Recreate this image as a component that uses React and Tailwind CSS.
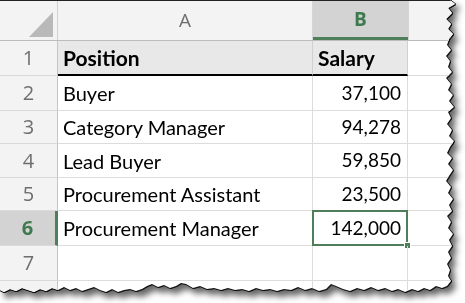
import React from "react";

const torn =
  "[clip-path:polygon(0px_0px,450px_0px,455px_4px,448px_8px,452px_13px,446px_19px,451px_24px,448px_29px,453px_34px,449px_39px,447px_45px,451px_50px,446px_56px,450px_61px,448px_67px,452px_72px,446px_78px,451px_84px,448px_90px,453px_95px,449px_101px,454px_107px,448px_112px,451px_118px,447px_124px,452px_130px,449px_136px,454px_141px,450px_147px,447px_153px,452px_158px,448px_164px,453px_170px,449px_176px,446px_181px,451px_187px,448px_193px,453px_199px,449px_205px,452px_211px,447px_216px,451px_222px,448px_228px,453px_234px,449px_240px,452px_246px,448px_252px,451px_258px,447px_264px,450px_270px,448px_276px,451px_281px,447px_286px,442px_288px,436px_286px,430px_290px,424px_288px,418px_291px,412px_289px,405px_292px,398px_289px,392px_291px,385px_288px,378px_290px,371px_287px,364px_290px,357px_288px,350px_291px,343px_289px,336px_286px,331px_284px,326px_289px,319px_291px,312px_288px,305px_290px,298px_287px,291px_290px,284px_289px,277px_291px,270px_289px,263px_290px,256px_288px,249px_291px,242px_289px,235px_290px,228px_288px,221px_290px,214px_288px,207px_289px,200px_286px,193px_288px,186px_284px,181px_283px,176px_286px,170px_288px,164px_285px,158px_287px,152px_284px,147px_286px,142px_289px,136px_291px,130px_289px,124px_290px,118px_292px,112px_289px,106px_292px,100px_290px,94px_287px,88px_289px,82px_291px,76px_288px,70px_290px,64px_287px,58px_290px,52px_288px,46px_291px,40px_289px,34px_292px,28px_290px,22px_288px,16px_291px,10px_289px,4px_292px,0px_290px)]";

const rows = [
  { n: 1, a: "Position", b: "Salary", h: "h-[35px]" },
  { n: 2, a: "Buyer", b: "37,100", h: "h-[35px]" },
  { n: 3, a: "Category Manager", b: "94,278", h: "h-[33px]" },
  { n: 4, a: "Lead Buyer", b: "59,850", h: "h-[34px]" },
  { n: 5, a: "Procurement Assistant", b: "23,500", h: "h-[33px]" },
  { n: 6, a: "Procurement Manager", b: "142,000", h: "h-[35px]" },
  { n: 7, a: "", b: "", h: "h-[35px]" },
  { n: 8, a: "", b: "", h: "h-[34px]" },
];

const cellFont = "font-['Lato','Open_Sans',sans-serif] text-black";
const headFont = "font-['Open_Sans','Noto_Sans',sans-serif] text-[19px]";

export default function App() {
  return (
    <div className="w-[465px] h-[303px] bg-white overflow-hidden">
      <div className="[filter:drop-shadow(1px_0_0_#111)_drop-shadow(0_1px_0_#111)_drop-shadow(4px_5px_3px_rgba(0,0,0,0.6))]">
        <div className={`w-[458px] h-[296px] bg-white overflow-hidden border-t border-[#222] ${torn}`}>
          {/* column header row */}
          <div className="flex h-[40px] bg-[#f3f3f3] border-b border-[#bcbcbc]">
            <div className="w-[58px] shrink-0 border-r border-[#d0d0d0] relative">
              <svg className="absolute left-0 top-0" width="58" height="40">
                <polygon points="29,36 53,36 53,11" fill="#b9b9b9" />
              </svg>
            </div>
            <div className={`w-[255px] shrink-0 border-r border-[#d6d6d6] flex items-center justify-center text-[#6e6e6e] ${headFont}`}>
              A
            </div>
            <div className={`w-[95px] shrink-0 bg-[#d3d3d3] border-b-[3px] border-[#4f7f5a] flex items-center justify-center font-bold text-[#3f7a4e] ${headFont}`}>
              B
            </div>
            <div className="flex-1 border-l border-[#d6d6d6]" />
          </div>

          {rows.map((r) => {
            const isHead = r.n === 1;
            const isSel = r.n === 6;
            return (
              <div key={r.n} className={`flex ${r.h}`}>
                <div
                  className={`w-[58px] shrink-0 flex items-center justify-center border-b border-[#dadada] text-[20px] ${headFont} ${
                    isSel
                      ? "bg-[#d3d3d3] text-[#3f7a4e] font-bold border-r-[3px] border-r-[#4f7f5a]"
                      : "bg-[#f3f3f3] text-[#6e6e6e] border-r border-r-[#c4c4c4]"
                  }`}
                >
                  {r.n}
                </div>
                <div
                  className={`w-[255px] shrink-0 flex items-center pl-[5px] border-r ${cellFont} ${
                    isHead
                      ? "bg-[#e8e8e8] font-bold text-[21px] border-b-2 border-b-black border-r-[#d0d0d0]"
                      : "text-[20px] border-b border-[#dcdcdc]"
                  }`}
                >
                  {r.a}
                </div>
                <div
                  className={`relative w-[95px] shrink-0 flex items-center border-r ${cellFont} ${
                    isHead
                      ? "bg-[#e8e8e8] font-bold text-[21px] justify-start pl-[5px] border-b-2 border-b-black border-r-[#d0d0d0]"
                      : "text-[19px] justify-end pr-[6px] border-b border-[#dcdcdc]"
                  }`}
                >
                  {r.b}
                  {isSel && (
                    <>
                      <div className="absolute left-[-1px] top-[-1px] right-[-1px] bottom-[-1px] border-2 border-[#4f7f5a]" />
                      <div className="absolute right-[-4px] bottom-[-4px] w-[7px] h-[7px] bg-[#4f7f5a] border border-white" />
                    </>
                  )}
                </div>
                <div className="flex-1 border-b border-[#dcdcdc]" />
              </div>
            );
          })}
        </div>
      </div>
    </div>
  );
}
